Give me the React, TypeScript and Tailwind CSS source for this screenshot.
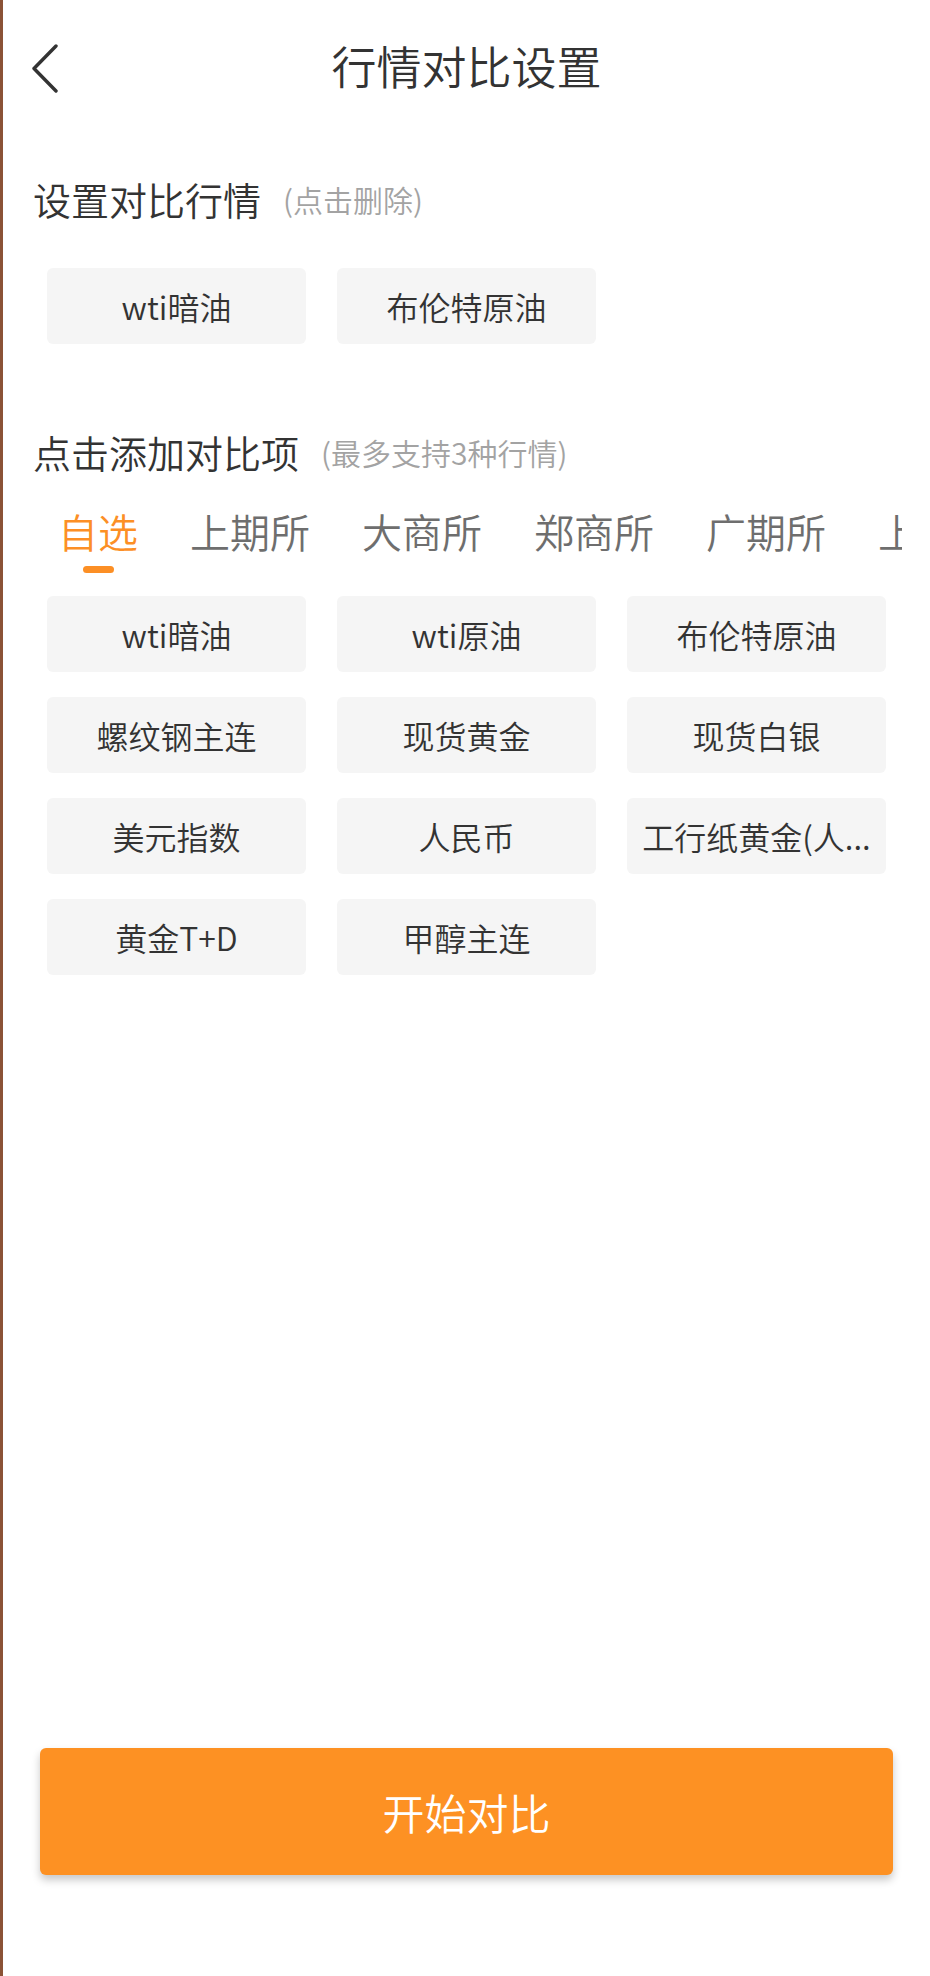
import React from "react";

const selected = ["wti暗油", "布伦特原油"];
const tabs = ["自选", "上期所", "大商所", "郑商所", "广期所", "上海金"];
const items = [
  "wti暗油",
  "wti原油",
  "布伦特原油",
  "螺纹钢主连",
  "现货黄金",
  "现货白银",
  "美元指数",
  "人民币",
  "工行纸黄金(人...",
  "黄金T+D",
  "甲醇主连",
];

function Chip({ label }: { label: string }) {
  return (
    <div className="flex h-[76px] w-[259px] items-center justify-center overflow-hidden whitespace-nowrap rounded-[6px] bg-[#f5f5f5] px-[10px] text-[32px] font-[350] leading-[46px] text-[#333333]">
      {label}
    </div>
  );
}

export default function App() {
  return (
    <div
      className="flex h-[1976px] w-[930px] flex-col border-l-[3px] border-[#8b5236] bg-white"
      style={{ fontFamily: '"Noto Sans CJK SC", Roboto, sans-serif' }}
    >
      {/* Header */}
      <div className="grid h-[140px] grid-cols-[100px_1fr_100px] items-center px-[29px]">
        <svg width="30" height="52" viewBox="0 0 30 52" fill="none" className="mt-[-2px]">
          <polyline
            points="24,3 2,25.5 24,48"
            stroke="#333333"
            strokeWidth="3.4"
            strokeLinecap="round"
            strokeLinejoin="round"
          />
        </svg>
        <div className="mb-[8px] text-center text-[45px] font-[350] leading-[66px] text-[#333333]">行情对比设置</div>
        <div />
      </div>

      {/* Section 1 */}
      <div className="mt-[29px] flex h-[60px] items-center pl-[30px]">
        <span className="text-[38px] font-[350] leading-[56px] text-[#333333]">设置对比行情</span>
        <span className="ml-[22px] text-[30px] font-[350] leading-[44px] text-[#a3a3a3]">(点击删除)</span>
      </div>
      <div className="mt-[39px] flex gap-[31px] pl-[44px]">
        {selected.map((s) => (
          <Chip key={s} label={s} />
        ))}
      </div>

      {/* Section 2 */}
      <div className="mt-[78px] flex h-[60px] items-center pl-[30px]">
        <span className="text-[38px] font-[350] leading-[56px] text-[#333333]">点击添加对比项</span>
        <span className="ml-[22px] text-[30px] font-[350] leading-[44px] text-[#a3a3a3]">(最多支持3种行情)</span>
      </div>

      <div className="mt-[20px] ml-[29px] flex w-[870px] overflow-hidden">
        {tabs.map((t, i) => (
          <div key={t} className="flex shrink-0 flex-col items-center px-[26px]">
            <div
              className={
                i === 0
                  ? "h-[58px] whitespace-nowrap text-[40px] font-[350] leading-[58px] text-[#fc8f25]"
                  : "h-[58px] whitespace-nowrap text-[40px] font-[350] leading-[58px] text-[#6e6e6e]"
              }
            >
              {t}
            </div>
            <div
              className={
                i === 0
                  ? "mt-[6px] h-[7px] w-[31px] rounded-full bg-[#fc8f25]"
                  : "mt-[6px] h-[7px] w-[31px] rounded-full bg-transparent"
              }
            />
          </div>
        ))}
      </div>

      <div className="mt-[23px] grid grid-cols-[259px_259px_259px] gap-x-[31px] gap-y-[25px] pl-[44px]">
        {items.map((s) => (
          <Chip key={s} label={s} />
        ))}
      </div>

      {/* Button */}
      <div className="mt-auto mb-[101px] px-[37px]">
        <button className="flex h-[127px] w-full items-center justify-center rounded-[6px] bg-[#fd9123] text-[42px] font-[350] text-white shadow-[0_5px_8px_rgba(0,0,0,0.22)]">
          开始对比
        </button>
      </div>
    </div>
  );
}
